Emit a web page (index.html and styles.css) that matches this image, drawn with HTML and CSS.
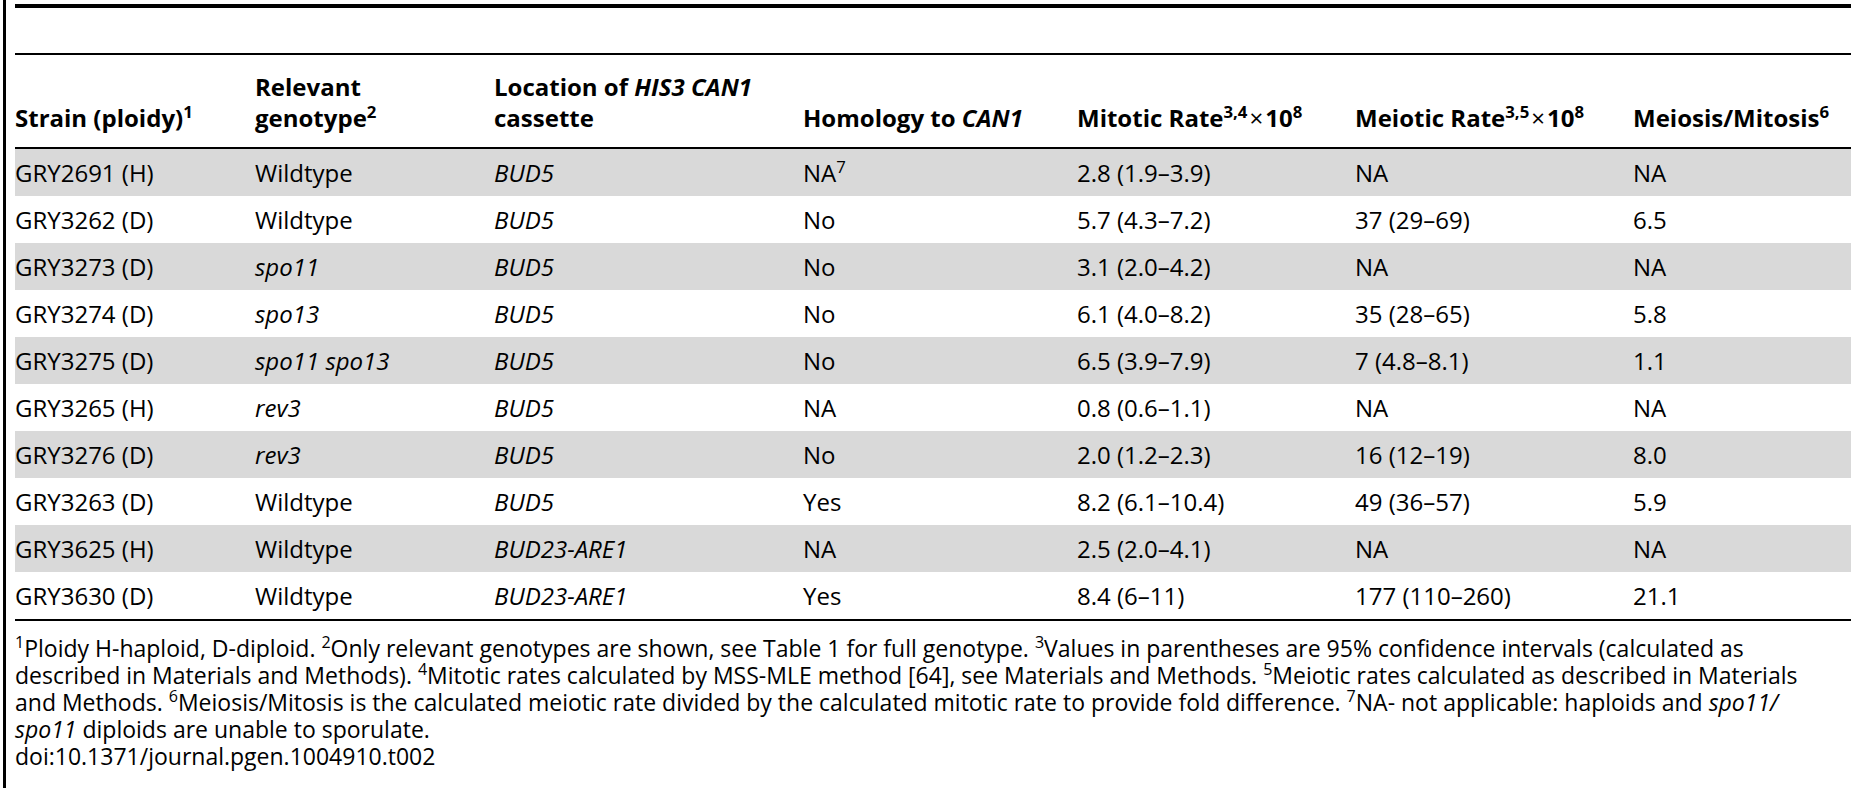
FILE: index.html
```html
<!DOCTYPE html>
<html lang="en">
  <head>
    <meta charset="UTF-8" />
    <title>Table 2</title>
    <link rel="stylesheet" href="styles.css">
  </head>
  <body>
    <div class="page">
      <div class="table-box">
        <div class="caption-space"></div>
        <table class="data">
          <colgroup>
            <col class="c1"><col class="c2"><col class="c3"><col class="c4"><col class="c5"><col class="c6"><col class="c7">
          </colgroup>
          <thead>
            <tr>
              <th>Strain (ploidy)<sup>1</sup></th>
              <th>Relevant<br>genotype<sup>2</sup></th>
              <th>Location of <i>HIS3 CAN1</i><br>cassette</th>
              <th>Homology to <i>CAN1</i></th>
              <th>Mitotic Rate<sup>3,4</sup><span class="times">×</span>10<sup>8</sup></th>
              <th>Meiotic Rate<sup>3,5</sup><span class="times">×</span>10<sup>8</sup></th>
              <th>Meiosis/Mitosis<sup>6</sup></th>
            </tr>
          </thead>
          <tbody>
            <tr class="shade">
              <td>GRY2691 (H)</td><td>Wildtype</td><td><i>BUD5</i></td><td>NA<sup>7</sup></td><td>2.8 (1.9–3.9)</td><td>NA</td><td>NA</td>
            </tr>
            <tr>
              <td>GRY3262 (D)</td><td>Wildtype</td><td><i>BUD5</i></td><td>No</td><td>5.7 (4.3–7.2)</td><td>37 (29–69)</td><td>6.5</td>
            </tr>
            <tr class="shade">
              <td>GRY3273 (D)</td><td><i>spo11</i></td><td><i>BUD5</i></td><td>No</td><td>3.1 (2.0–4.2)</td><td>NA</td><td>NA</td>
            </tr>
            <tr>
              <td>GRY3274 (D)</td><td><i>spo13</i></td><td><i>BUD5</i></td><td>No</td><td>6.1 (4.0–8.2)</td><td>35 (28–65)</td><td>5.8</td>
            </tr>
            <tr class="shade">
              <td>GRY3275 (D)</td><td><i>spo11 spo13</i></td><td><i>BUD5</i></td><td>No</td><td>6.5 (3.9–7.9)</td><td>7 (4.8–8.1)</td><td>1.1</td>
            </tr>
            <tr>
              <td>GRY3265 (H)</td><td><i>rev3</i></td><td><i>BUD5</i></td><td>NA</td><td>0.8 (0.6–1.1)</td><td>NA</td><td>NA</td>
            </tr>
            <tr class="shade">
              <td>GRY3276 (D)</td><td><i>rev3</i></td><td><i>BUD5</i></td><td>No</td><td>2.0 (1.2–2.3)</td><td>16 (12–19)</td><td>8.0</td>
            </tr>
            <tr>
              <td>GRY3263 (D)</td><td>Wildtype</td><td><i>BUD5</i></td><td>Yes</td><td>8.2 (6.1–10.4)</td><td>49 (36–57)</td><td>5.9</td>
            </tr>
            <tr class="shade">
              <td>GRY3625 (H)</td><td>Wildtype</td><td><i>BUD23-ARE1</i></td><td>NA</td><td>2.5 (2.0–4.1)</td><td>NA</td><td>NA</td>
            </tr>
            <tr>
              <td>GRY3630 (D)</td><td>Wildtype</td><td><i>BUD23-ARE1</i></td><td>Yes</td><td>8.4 (6–11)</td><td>177 (110–260)</td><td>21.1</td>
            </tr>
          </tbody>
        </table>
        <div class="notes">
          <p><sup>1</sup>Ploidy H-haploid, D-diploid. <sup>2</sup>Only relevant genotypes are shown, see Table 1 for full genotype. <sup>3</sup>Values in parentheses are 95% confidence intervals (calculated as<br>described in Materials and Methods). <sup>4</sup>Mitotic rates calculated by MSS-MLE method [64], see Materials and Methods. <sup>5</sup>Meiotic rates calculated as described in Materials<br>and Methods. <sup>6</sup>Meiosis/Mitosis is the calculated meiotic rate divided by the calculated mitotic rate to provide fold difference. <sup>7</sup>NA- not applicable: haploids and <i>spo11/</i><br><i>spo11</i> diploids are unable to sporulate.</p>
          <p class="doi">doi:10.1371/journal.pgen.1004910.t002</p>
        </div>
      </div>
    </div>
  </body>
</html>
```

FILE: styles.css
```css
body {
    margin: 0;
    font-family: "Open Sans", "DejaVu Sans", sans-serif;
    font-size: 24px;
    color: #000;
    background: #fff;
}

.page {
    margin-left: 3px;
    border-left: 3px solid #000;
    height: 788px;
    padding: 4px 4px 0 9px;
    box-sizing: border-box;
}

.table-box {
    border-top: 4px solid #000;
}

.caption-space {
    height: 45px;
    border-bottom: 2px solid #000;
}

.data {
    width: 100%;
    border-collapse: collapse;
    table-layout: fixed;
}

.c1 { width: 240px; }
.c2 { width: 239px; }
.c3 { width: 309px; }
.c4 { width: 274px; }
.c5 { width: 278px; }
.c6 { width: 278px; }

.data th {
    text-align: left;
    vertical-align: bottom;
    font-weight: bold;
    line-height: 31px;
    height: 93px;
    padding: 0 0 14px 0;
    box-sizing: border-box;
    border-bottom: 2px solid #000;
    white-space: nowrap;
}

.data th sup,
.data td sup {
    font-size: 0.7em;
    line-height: 0;
}

.times {
    font-weight: normal;
    padding: 0 2px;
}

.data td {
    height: 47px;
    padding: 0;
    line-height: 28px;
    vertical-align: middle;
    white-space: nowrap;
}

.data tbody tr:last-child td {
    border-bottom: 2px solid #000;
}

.shade td {
    background: #d9d9d9;
}

.notes {
    padding-top: 14px;
    font-size: 23px;
    line-height: 27px;
}

.notes p {
    margin: 0;
    white-space: nowrap;
}

.notes sup {
    font-size: 0.7em;
    line-height: 0;
}
```
